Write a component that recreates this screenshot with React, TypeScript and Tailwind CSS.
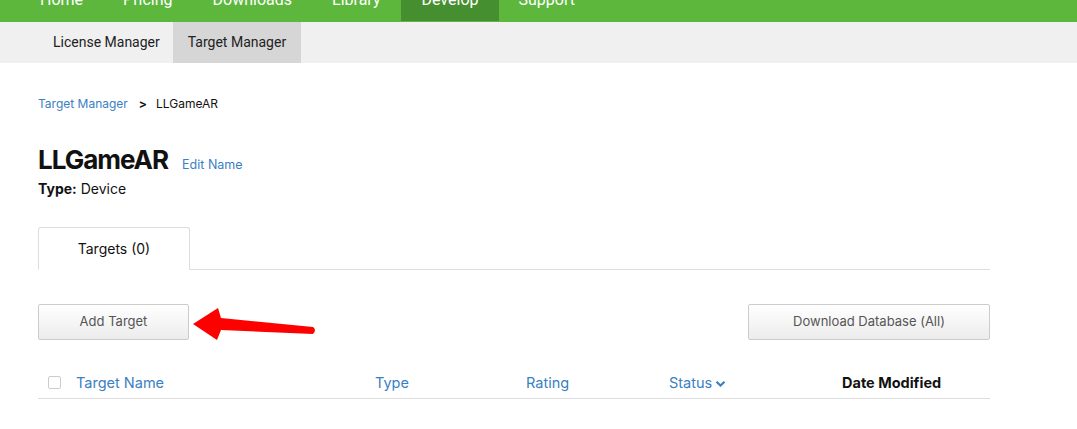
const navItems = ["Home", "Pricing", "Downloads", "Library", "Develop", "Support"];
const blue = "text-[#3a80c3]";

function Chevron() {
  return (
    <svg width="11" height="8" viewBox="0 0 11 8" className="ml-[3px] mt-[2px]">
      <path d="M1.5 1.8 L5.5 5.6 L9.5 1.8" fill="none" stroke="#3a80c3" strokeWidth="2.2" />
    </svg>
  );
}

export default function App() {
  return (
    <div className="min-h-[429px] bg-white font-['Inter',sans-serif] text-[#111]">
      <div className="h-[22px] overflow-hidden bg-[#5cb73c]">
        <nav className="-mt-[12px] flex pl-[20px] font-['Roboto',sans-serif] text-[16px] text-white">
          {navItems.map((item) => (
            <span
              key={item}
              className={`h-[33px] px-5 leading-6 ${item === "Develop" ? "ml-px bg-[#468f30]" : ""}`}
            >
              {item}
            </span>
          ))}
        </nav>
      </div>

      <div className="flex h-[41px] bg-[#f0f0f0] pl-[38px] font-['Roboto',sans-serif] text-[14px] text-[#222]">
        <span className="flex items-center pl-[15px] pr-[13px]">License Manager</span>
        <span className="flex items-center bg-[#d6d6d6] px-[15px]">Target Manager</span>
      </div>

      <main className="w-[990px] pl-[38px]">
        <div className="mt-[33px] flex items-center text-[12px] leading-4">
          <span className={blue}>Target Manager</span>
          <span className="ml-[11px] mr-[9px] font-bold">&gt;</span>
          <span>LLGameAR</span>
        </div>

        <div className="mt-[32px] flex items-baseline">
          <h1 className="text-[26px] font-bold leading-8 tracking-[-1px]">LLGameAR</h1>
          <span className={`ml-[14px] text-[12.5px] ${blue}`}>Edit Name</span>
        </div>
        <p className="mt-[3px] text-[14px] leading-5">
          <span className="font-bold">Type:</span> Device
        </p>

        <div className="mt-[28px] flex border-b border-[#ddd]">
          <div className="-mb-px flex h-[43px] w-[152px] items-center justify-center rounded-t-[3px] border border-b-white border-[#ddd] bg-white text-[14px]">
            Targets (0)
          </div>
        </div>

        <div className="relative mt-[34px] flex justify-between">
          <button className="h-[36px] w-[151px] rounded-[2px] border border-[#ccc] bg-gradient-to-b from-white to-[#ececec] text-[13px] text-[#555]">
            Add Target
          </button>
          <button className="h-[36px] w-[242px] rounded-[2px] border border-[#ccc] bg-gradient-to-b from-white to-[#ececec] text-[13px] text-[#555]">
            Download Database (All)
          </button>
          <svg
            className="pointer-events-none absolute left-[150px] top-0"
            width="130"
            height="40"
            viewBox="150 0 130 40"
          >
            <path
              d="M155 20 L180 4 L183 14 L275 23 Q279 26 275 30 L183 26 L179 36 Z"
              fill="#ff0000"
            />
          </svg>
        </div>

        <div className="mt-[27px] flex h-[32px] items-center border-b border-[#ddd] text-[14.5px]">
          <span className="ml-[10px] h-[13px] w-[13px] rounded-[2px] border border-[#ccc]" />
          <span className={`ml-[15px] w-[299px] ${blue}`}>Target Name</span>
          <span className={`w-[151px] ${blue}`}>Type</span>
          <span className={`w-[143px] ${blue}`}>Rating</span>
          <span className={`flex w-[173px] items-center ${blue}`}>
            Status
            <Chevron />
          </span>
          <span className="font-bold">Date Modified</span>
        </div>
      </main>
    </div>
  );
}
